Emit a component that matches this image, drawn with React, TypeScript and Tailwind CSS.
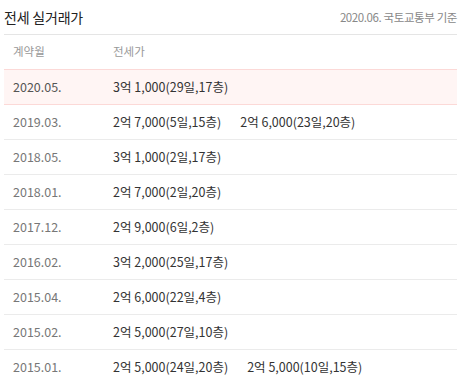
const rows: { month: string; prices: string[]; active?: boolean }[] = [
  { month: "2020.05.", prices: ["3억 1,000(29일,17층)"], active: true },
  { month: "2019.03.", prices: ["2억 7,000(5일,15층)", "2억 6,000(23일,20층)"] },
  { month: "2018.05.", prices: ["3억 1,000(2일,17층)"] },
  { month: "2018.01.", prices: ["2억 7,000(2일,20층)"] },
  { month: "2017.12.", prices: ["2억 9,000(6일,2층)"] },
  { month: "2016.02.", prices: ["3억 2,000(25일,17층)"] },
  { month: "2015.04.", prices: ["2억 6,000(22일,4층)"] },
  { month: "2015.02.", prices: ["2억 5,000(27일,10층)"] },
  { month: "2015.01.", prices: ["2억 5,000(24일,20층)", "2억 5,000(10일,15층)"] },
];

export default function App() {
  return (
    <div
      className="min-h-screen bg-white px-[4px] w-[470px] overflow-hidden"
      style={{ fontFamily: '"Noto Sans CJK KR", "Noto Sans", sans-serif' }}
    >
      <div className="w-[453px]">
        <div className="flex items-center justify-between h-[35px] pt-[1px] border-b border-[#e5e5e5]">
          <h2 className="text-[14px] text-[#222] tracking-[-0.2px]">전세 실거래가</h2>
          <span className="text-[11.5px] text-[#888] tracking-[-0.4px]">2020.06. 국토교통부 기준</span>
        </div>
        <div className="flex items-center h-[34px] text-[11.5px] text-[#999]">
          <div className="w-[109px] pl-[9px]">계약월</div>
          <div>전세가</div>
        </div>
        {rows.map((row) => (
          <div
            key={row.month}
            className={
              row.active
                ? "flex items-center h-[36px] bg-[#fff5f4] border-y border-[#fcd9d7] text-[12.5px]"
                : "flex items-center h-[35px] border-b border-[#ebebeb] text-[12.5px]"
            }
          >
            <div className={row.active ? "w-[109px] pl-[9px] text-[#555]" : "w-[109px] pl-[9px] text-[#777]"}>
              {row.month}
            </div>
            <div className="flex gap-[19px] text-[#333]">
              {row.prices.map((p) => (
                <span key={p}>{p}</span>
              ))}
            </div>
          </div>
        ))}
      </div>
    </div>
  );
}
